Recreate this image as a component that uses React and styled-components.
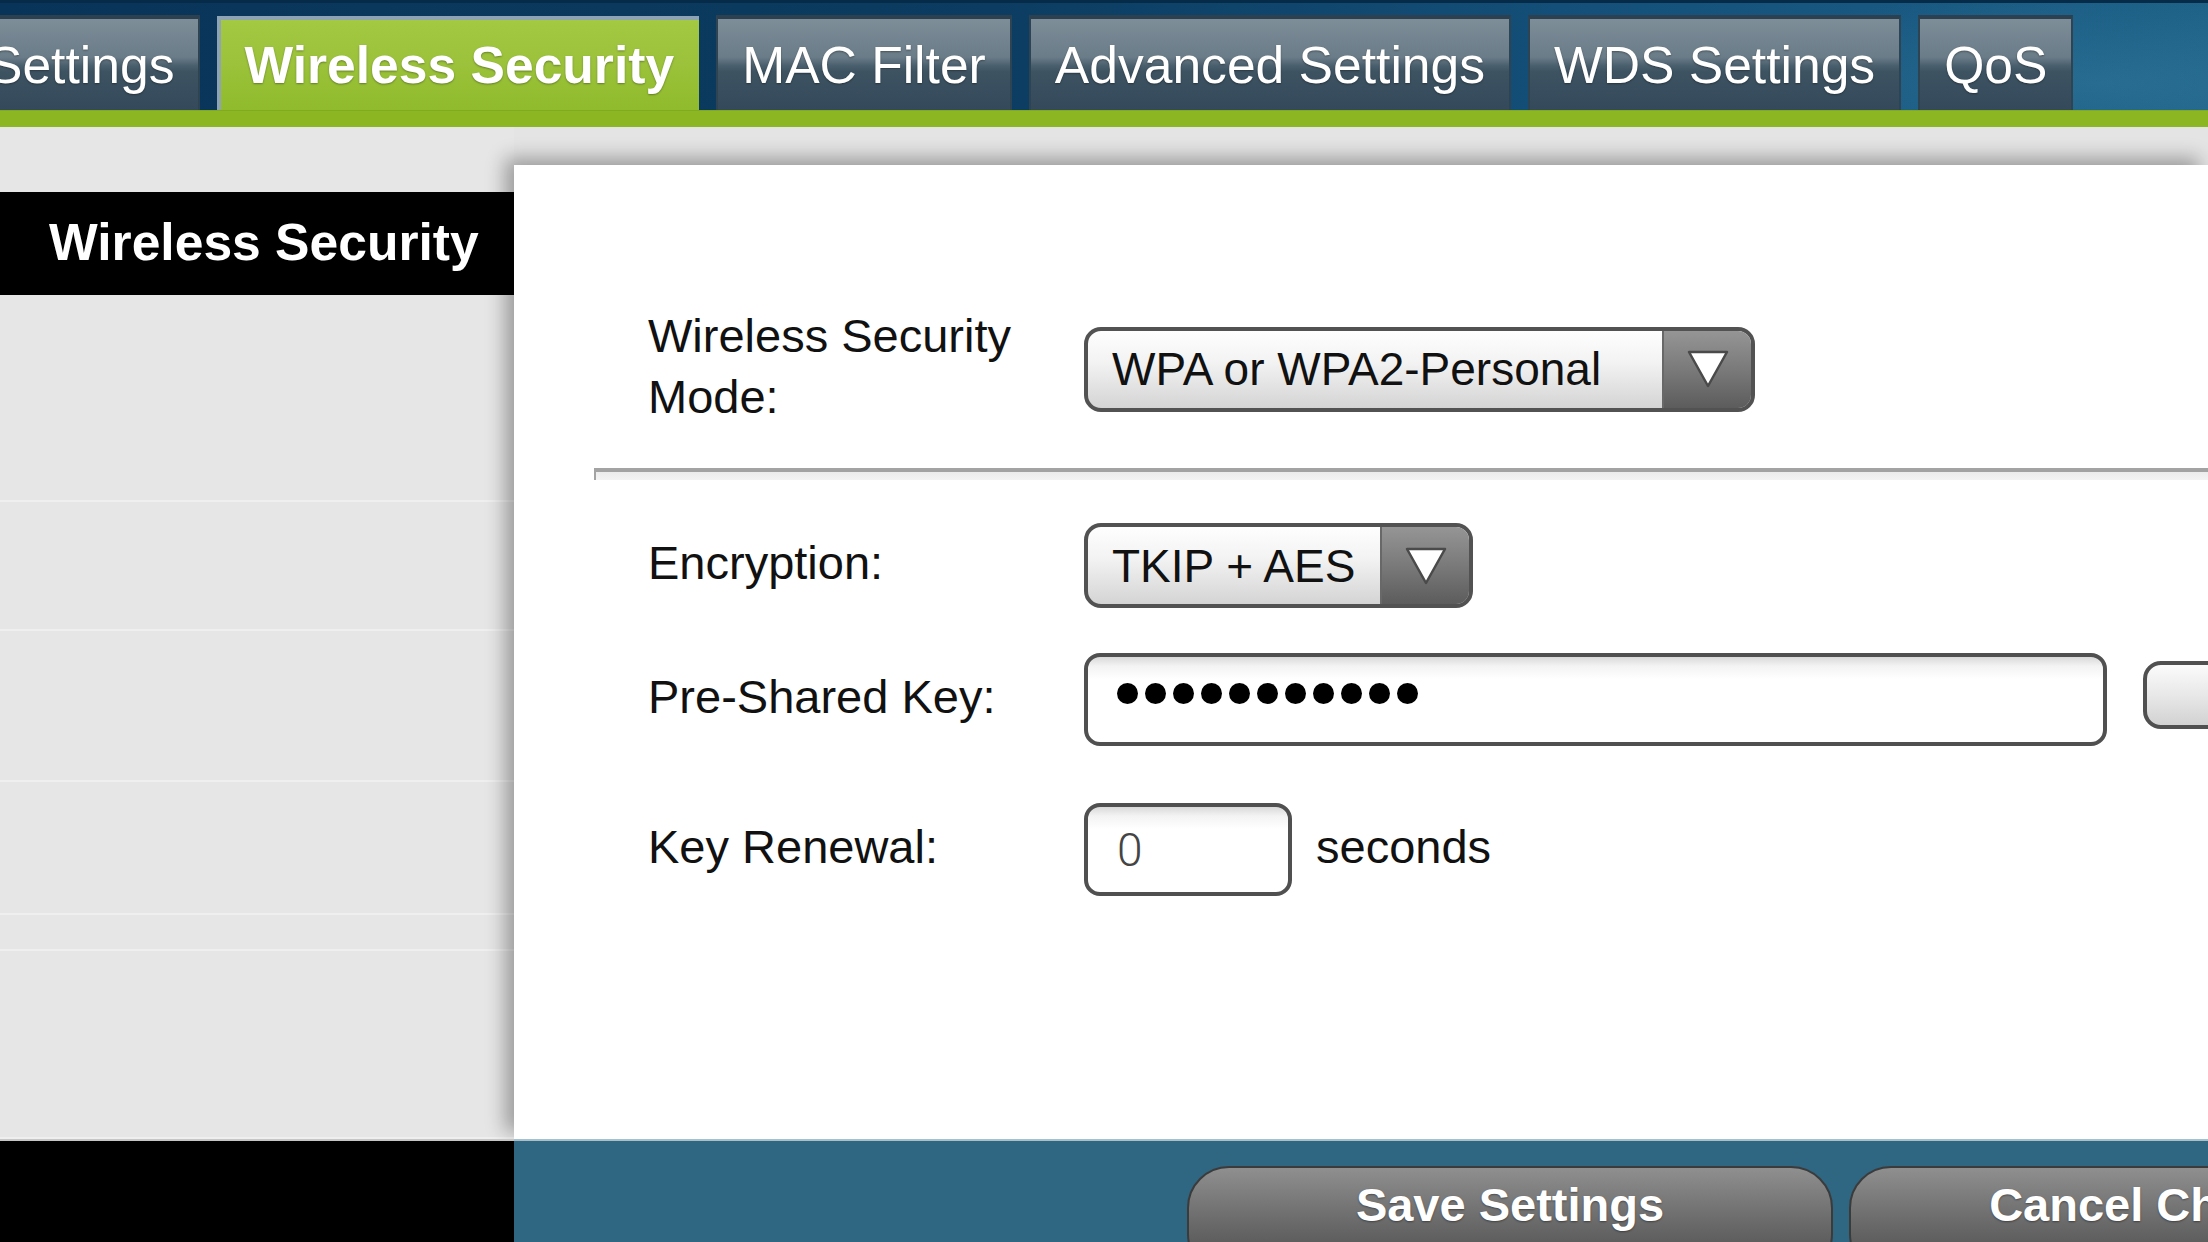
import React from 'react'
import styled, { createGlobalStyle } from 'styled-components'

const GlobalStyle = createGlobalStyle`
  html, body {
    margin: 0;
    padding: 0;
  }
  body {
    width: 2208px;
    height: 1242px;
    overflow: hidden;
    background: #e4e4e4;
    font-family: 'Liberation Sans', Arial, Helvetica, sans-serif;
  }
  #root {
    width: 2208px;
    height: 1242px;
  }
`

const Page = styled.div`
  display: grid;
  grid-template-rows: 127px 1fr 103px;
  width: 2208px;
  height: 1242px;
  overflow: hidden;
`

const Header = styled.header`
  display: flex;
  flex-direction: column;
  box-sizing: border-box;
  border-top: 3px solid #062b49;
  background:
    radial-gradient(ellipse 420px 90px at 2100px 80px, rgba(80, 150, 185, 0.25), transparent),
    linear-gradient(90deg, #093459 0%, #0c3c61 45%, #14507a 72%, #1d6187 100%);
  overflow: hidden;
`

const TabRow = styled.nav`
  flex: 1;
  display: flex;
  align-items: flex-end;
  gap: 17px;
  margin-left: -38px;
`

const Tab = styled.div`
  flex: 0 0 auto;
  height: ${(p) => (p.$active ? 94 : 95)}px;
  box-sizing: border-box;
  display: flex;
  align-items: center;
  padding: ${(p) => (p.$active ? '0 25px 0 23px' : '0 24px')};
  font-size: 51.6px;
  font-weight: ${(p) => (p.$active ? 700 : 400)};
  color: #fff;
  white-space: nowrap;
  text-shadow: 0 1px 2px rgba(0, 0, 0, 0.35);
  background: ${(p) =>
    p.$active
      ? 'linear-gradient(#a3c842 0%, #9bc23a 50%, #90bb2c 100%)'
      : 'linear-gradient(#7d8e99 0%, #6a7c88 42%, #4b606e 51%, #3d5362 58%, #34495a 100%)'};
  border-top: 4px solid ${(p) => (p.$active ? '#8ea3b3' : '#2c404f')};
  border-left: ${(p) => (p.$active ? '4px solid #8ea3b3' : '2px solid #2f4453')};
  border-right: ${(p) => (p.$active ? '0' : '2px solid #2f4453')};
`

const GreenBar = styled.div`
  height: 17px;
  box-sizing: border-box;
  background: #8cb723;
  border-top: 1px solid #80aa1f;
`

const Body = styled.div`
  display: grid;
  grid-template-columns: 514px 1fr;
  min-height: 0;
`

const Sidebar = styled.aside`
  display: flex;
  flex-direction: column;
  padding-top: 65px;
  background: #e6e6e6;
`

const SideTitle = styled.div`
  position: relative;
  z-index: 2;
  height: 103px;
  box-sizing: border-box;
  display: flex;
  align-items: center;
  padding: 0 0 4px 49px;
  background: #000;
  color: #fff;
  font-size: 51.6px;
  font-weight: 700;
  white-space: nowrap;
`

const SideItem = styled.div`
  flex: ${(p) => (p.$h ? `0 0 ${p.$h}px` : '1')};
  box-sizing: border-box;
  border-bottom: 2px solid #efefef;
`

const Main = styled.main`
  display: flex;
  flex-direction: column;
  padding-top: 38px;
  min-width: 0;
`

const Panel = styled.section`
  position: relative;
  z-index: 1;
  flex: 1;
  background: #fff;
  box-shadow: -9px -7px 18px rgba(0, 0, 0, 0.32);
  padding: 146px 0 0 134px;
  overflow: hidden;
`

const Row = styled.div`
  display: flex;
  align-items: center;
  margin-top: ${(p) => p.$gap || 0}px;
`

const Label = styled.div`
  flex: 0 0 436px;
  box-sizing: border-box;
  padding-right: 36px;
  margin-top: -6px;
  font-size: 47px;
  line-height: 61px;
  color: #111;
`

const Divider = styled.div`
  margin: 41px 0 0 -54px;
  height: 8px;
  border-top: 4px solid #a3a3a3;
  border-left: 2px solid #a3a3a3;
  background: linear-gradient(#ececec, #f4f4f4);
`

const Select = styled.div`
  flex: 0 0 ${(p) => p.$w}px;
  height: 85px;
  box-sizing: border-box;
  display: flex;
  border: 4px solid #525252;
  border-radius: 17px;
  overflow: hidden;
  background: linear-gradient(#fefefe 0%, #f3f3f3 40%, #d4d4d4 100%);
`

const SelectValue = styled.span`
  flex: 1;
  display: flex;
  align-items: center;
  padding-left: 24px;
  font-size: 46px;
  color: #111;
  white-space: nowrap;
`

const SelectArrow = styled.span`
  flex: 0 0 87px;
  display: flex;
  align-items: center;
  justify-content: center;
  border-left: 2px solid #686868;
  background: linear-gradient(#959595 0%, #777 55%, #5c5c5c 100%);
`

const Field = styled.div`
  flex: 0 0 ${(p) => p.$w}px;
  height: 93px;
  box-sizing: border-box;
  display: flex;
  align-items: center;
  padding-left: 29px;
  border: 4px solid #505050;
  border-radius: 16px;
  background: linear-gradient(#d9d9d9 0, #f3f3f3 9px, #fff 22px, #fff 100%);
`

const Dots = styled.span`
  display: flex;
  gap: 7px;
  margin-top: -12px;
`

const Dot = styled.span`
  width: 21px;
  height: 21px;
  border-radius: 50%;
  background: #000;
`

const FieldValue = styled.span`
  font-family: Roboto, 'Liberation Sans', sans-serif;
  font-weight: 300;
  font-size: 46px;
  color: #444;
`

const SmallButton = styled.div`
  flex: 0 0 90px;
  height: 68px;
  margin: 0 0 9px 36px;
  box-sizing: border-box;
  border: 4px solid #505050;
  border-radius: 18px;
  background: linear-gradient(#fbfbfb, #e8e8e8 50%, #d2d2d2);
`

const Unit = styled.span`
  margin: -7px 0 0 24px;
  font-size: 47px;
  color: #111;
`

const Footer = styled.footer`
  position: relative;
  z-index: 2;
  display: grid;
  grid-template-columns: 514px 1fr;
`

const FooterLeft = styled.div`
  background: #000;
  border-top: 2px solid #c6c6c6;
`

const FooterRight = styled.div`
  display: flex;
  gap: 16px;
  padding: 25px 0 0 673px;
  background: #2f6681;
  border-top: 2px solid #a7c0cc;
  overflow: hidden;
`

const ActionButton = styled.button`
  flex: 0 0 646px;
  height: 110px;
  box-sizing: border-box;
  display: flex;
  justify-content: center;
  align-items: flex-start;
  padding: 6px 0 0;
  border: 2px solid #3b3b3b;
  border-radius: 42px;
  background: linear-gradient(#8f8f8f 0%, #6b6b6b 50%, #4a4a4a 100%);
  color: #fff;
  font-family: 'Liberation Sans', Arial, sans-serif;
  font-size: 47px;
  font-weight: 700;
  line-height: 62px;
  white-space: nowrap;
  text-shadow: 0 1px 2px rgba(0, 0, 0, 0.4);
`

const tabs = ['Settings', 'Wireless Security', 'MAC Filter', 'Advanced Settings', 'WDS Settings', 'QoS']
const sideRows = [207, 129, 151, 133, 36, 0]

function Arrow() {
  return (
    <svg width="44" height="40" viewBox="0 0 44 40">
      <polygon points="3,3 41,3 22,37" fill="#fff" stroke="#4a4a4a" strokeWidth="2.5" strokeLinejoin="round" />
    </svg>
  )
}

export default function App() {
  return (
    <Page>
      <GlobalStyle />
      <Header>
        <TabRow>
          {tabs.map((t) => (
            <Tab key={t} $active={t === 'Wireless Security'}>
              {t}
            </Tab>
          ))}
        </TabRow>
        <GreenBar />
      </Header>

      <Body>
        <Sidebar>
          <SideTitle>Wireless Security</SideTitle>
          {sideRows.map((h, i) => (
            <SideItem key={i} $h={h} />
          ))}
        </Sidebar>

        <Main>
          <Panel>
            <Row>
              <Label>Wireless Security Mode:</Label>
              <Select $w={671}>
                <SelectValue>WPA or WPA2-Personal</SelectValue>
                <SelectArrow>
                  <Arrow />
                </SelectArrow>
              </Select>
            </Row>

            <Divider />

            <Row $gap={43}>
              <Label>Encryption:</Label>
              <Select $w={389}>
                <SelectValue>TKIP + AES</SelectValue>
                <SelectArrow>
                  <Arrow />
                </SelectArrow>
              </Select>
            </Row>

            <Row $gap={45}>
              <Label>Pre-Shared Key:</Label>
              <Field $w={1023}>
                <Dots>
                  {Array.from({ length: 11 }).map((_, i) => (
                    <Dot key={i} />
                  ))}
                </Dots>
              </Field>
              <SmallButton />
            </Row>

            <Row $gap={57}>
              <Label>Key Renewal:</Label>
              <Field $w={208}>
                <FieldValue>0</FieldValue>
              </Field>
              <Unit>seconds</Unit>
            </Row>
          </Panel>
        </Main>
      </Body>

      <Footer>
        <FooterLeft />
        <FooterRight>
          <ActionButton>Save Settings</ActionButton>
          <ActionButton>Cancel Changes</ActionButton>
        </FooterRight>
      </Footer>
    </Page>
  )
}
